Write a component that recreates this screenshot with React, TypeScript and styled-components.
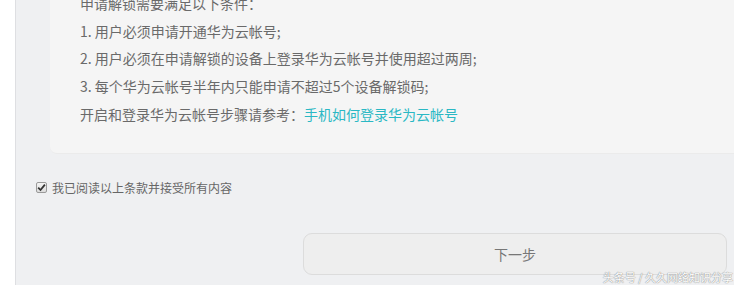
import React, { useState } from 'react';
import styled, { createGlobalStyle } from 'styled-components';

const GlobalStyle = createGlobalStyle`
  html, body {
    margin: 0;
    padding: 0;
    width: 734px;
    height: 285px;
    overflow: hidden;
    background: #eff0f2;
  }
  body {
    font-family: "Noto Sans CJK SC", "Open Sans", sans-serif;
  }
`;

const Page = styled.div`
  display: flex;
  width: 734px;
  height: 285px;
  overflow: hidden;
`;

const Sidebar = styled.div`
  width: 15px;
  flex-shrink: 0;
  background: #ffffff;
  border-right: 1px solid #dedfe2;
`;

const Main = styled.div`
  flex: 1;
  display: flex;
  flex-direction: column;
  background: #eff0f2;
`;

const Card = styled.div`
  margin: -10px 0 0 34px;
  padding: 0 0 24px 30px;
  background: #f5f5f5;
  border-radius: 0 0 0 7px;
  border-bottom: 1px solid #ebebeb;
`;

const Line = styled.p`
  margin: 0;
  font-size: 14px;
  line-height: 27.7px;
  color: #6a6a6a;
  white-space: nowrap;
`;

const Link = styled.a`
  color: #2ab8c4;
  text-decoration: none;
`;

const Agree = styled.label`
  display: flex;
  align-items: center;
  gap: 5px;
  margin: 26px 0 0 20px;
  font-size: 12px;
  line-height: 16px;
  color: #666666;
  cursor: pointer;
`;

const Box = styled.span`
  width: 11px;
  height: 11px;
  box-sizing: border-box;
  border: 1px solid #9a9a9a;
  border-radius: 2px;
  background: linear-gradient(#f4f4f4, #dcdcdc);
  display: flex;
  align-items: center;
  justify-content: center;
`;

const Footer = styled.div`
  display: flex;
  justify-content: flex-end;
  margin: 37px 7px 0 0;
  position: relative;
`;

const NextButton = styled.button`
  width: 424px;
  height: 42px;
  box-sizing: border-box;
  border: 1px solid #dcdcdc;
  border-radius: 9px;
  background: #eeeeee;
  color: #777777;
  font-family: "Noto Sans CJK SC", sans-serif;
  font-size: 14px;
  cursor: pointer;
`;

const Watermark = styled.span`
  position: absolute;
  right: -6px;
  bottom: -9px;
  font-size: 11px;
  line-height: 14px;
  color: #ffffff;
  white-space: nowrap;
  text-shadow: 0 0 1px #8a8a8a, 0 0 1px #8a8a8a;
`;

const App: React.FC = () => {
  const [checked, setChecked] = useState(true);

  return (
    <Page>
      <GlobalStyle />
      <Sidebar />
      <Main>
        <Card>
          <Line>申请解锁需要满足以下条件：</Line>
          <Line>1. 用户必须申请开通华为云帐号;</Line>
          <Line>2. 用户必须在申请解锁的设备上登录华为云帐号并使用超过两周;</Line>
          <Line>3. 每个华为云帐号半年内只能申请不超过5个设备解锁码;</Line>
          <Line>
            开启和登录华为云帐号步骤请参考：<Link href="#">手机如何登录华为云帐号</Link>
          </Line>
        </Card>

        <Agree onClick={() => setChecked(c => !c)}>
          <Box>
            {checked && (
              <svg width="9" height="9" viewBox="0 0 9 9">
                <path d="M1.2 4.6 L3.5 7 L7.9 1.6" stroke="#333" strokeWidth="1.8" fill="none" />
              </svg>
            )}
          </Box>
          我已阅读以上条款并接受所有内容
        </Agree>

        <Footer>
          <NextButton type="button">下一步</NextButton>
          <Watermark>头条号 / 久久网络知识分享</Watermark>
        </Footer>
      </Main>
    </Page>
  );
};

export default App;
